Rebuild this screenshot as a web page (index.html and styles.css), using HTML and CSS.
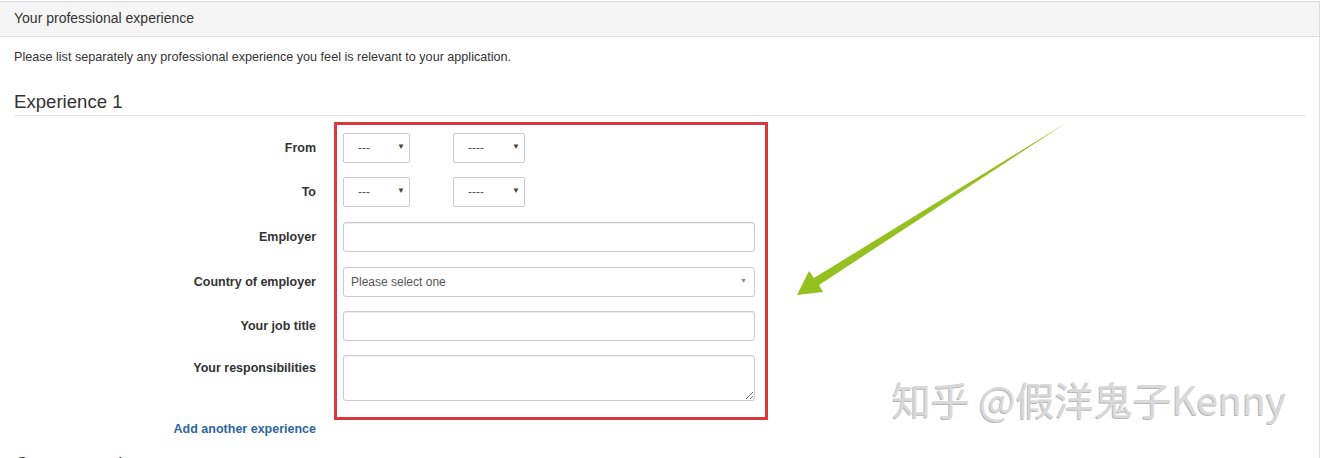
FILE: index.html
```html
<!DOCTYPE html>
<html lang="en">
<head>
  <meta charset="UTF-8">
  <meta name="viewport" content="width=device-width, initial-scale=1.0">
  <title>Your professional experience</title>
  <link rel="stylesheet" href="styles.css">
</head>
<body>
  <div class="panel">
    <div class="panel-heading">Your professional experience</div>
    <div class="panel-body">
      <p class="intro">Please list separately any professional experience you feel is relevant to your application.</p>
      <h3 class="section-title">Experience 1</h3>

      <form class="exp-form">
        <div class="form-row">
          <label>From</label>
          <div class="controls">
            <div class="select-wrap small"><select><option>---</option></select></div>
            <div class="select-wrap year"><select><option>----</option></select></div>
          </div>
        </div>
        <div class="form-row gap">
          <label>To</label>
          <div class="controls">
            <div class="select-wrap small"><select><option>---</option></select></div>
            <div class="select-wrap year"><select><option>----</option></select></div>
          </div>
        </div>
        <div class="form-row gap">
          <label for="employer">Employer</label>
          <div class="controls"><input type="text" id="employer"></div>
        </div>
        <div class="form-row">
          <label for="country">Country of employer</label>
          <div class="controls">
            <div class="select-wrap wide"><select id="country"><option>Please select one</option></select></div>
          </div>
        </div>
        <div class="form-row">
          <label for="job-title">Your job title</label>
          <div class="controls"><input type="text" id="job-title"></div>
        </div>
        <div class="form-row tall">
          <label for="resp">Your responsibilities</label>
          <div class="controls"><textarea id="resp"></textarea></div>
        </div>
        <div class="form-row link-row">
          <label><a href="#" class="add-link">Add another experience</a></label>
        </div>
        <!-- red annotation round the inputs -->
        <div class="highlight"></div>
      </form>

      <h3 class="section-title next">Current employment</h3>
    </div>
  </div>

  <svg class="arrow" width="1321" height="458" viewBox="0 0 1321 458">
    <polygon points="1066,123 819,285 823,292 797,295 809,271 814,278" fill="#94c11f"/>
  </svg>
  <div class="watermark">知乎 @假洋鬼子Kenny</div>
</body>
</html>
```

FILE: styles.css
```css
* {
  margin: 0;
  padding: 0;
  box-sizing: border-box;
}

body {
  font-family: "Liberation Sans", Arial, sans-serif;
  color: #333;
  background-color: #fff;
  width: 1321px;
  height: 458px;
  overflow: hidden;
  position: relative;
}

.panel {
  margin: 1px 1px 0 -1px;
  border: 1px solid #ddd;
  border-bottom: none;
  height: 500px;
}

.panel-heading {
  height: 35px;
  line-height: 33px;
  padding: 0 14px;
  font-size: 14px;
  background-color: #f5f5f5;
  border-bottom: 1px solid #ddd;
}

.panel-body {
  padding: 12px 13px 0 14px;
}

.intro {
  font-size: 12.6px;
  line-height: 17px;
}

.section-title {
  font-size: 18.6px;
  font-weight: normal;
  line-height: 20px;
  margin-top: 26px;
  padding-bottom: 3px;
  border-bottom: 1px solid #e5e5e5;
}

.section-title.next {
  border-bottom: none;
  margin-top: 17px;
  margin-left: 1px;
}

.exp-form {
  position: relative;
  margin-top: 17px;
}

.form-row {
  display: flex;
  align-items: center;
  height: 30px;
  margin-bottom: 14px;
}

.form-row.gap {
  margin-bottom: 15px;
}

.form-row label {
  width: 302px;
  flex-shrink: 0;
  text-align: right;
  font-size: 12.5px;
  font-weight: bold;
}

.form-row .controls {
  margin-left: 27px;
  display: flex;
  gap: 43px;
}

.form-row.tall {
  height: 46px;
  align-items: flex-start;
  margin-bottom: 19px;
}

.form-row.tall label {
  padding-top: 6px;
}

.form-row.link-row {
  height: 17px;
}

.add-link {
  color: #2d669d;
  text-decoration: none;
}

input[type="text"],
textarea,
select {
  font-family: "Liberation Sans", Arial, sans-serif;
  font-size: 12px;
  color: #555;
  background-color: #fff;
  border: 1px solid #ccc;
  border-radius: 3px;
  box-shadow: inset 0 1px 1px rgba(0, 0, 0, 0.07);
}

input[type="text"] {
  width: 412px;
  height: 30px;
}

textarea {
  width: 412px;
  height: 46px;
}

.select-wrap {
  position: relative;
}

.select-wrap select {
  appearance: none;
  -webkit-appearance: none;
  height: 30px;
  border-radius: 2px;
  box-shadow: none;
  padding-left: 14px;
  outline: none;
}

.select-wrap.small select {
  width: 67px;
}

.select-wrap.year select {
  width: 72px;
}

.select-wrap.wide select {
  width: 412px;
  padding-left: 7px;
  border-radius: 3px;
}

.select-wrap::after {
  content: "\25BC";
  position: absolute;
  right: 5px;
  top: 9px;
  font-size: 8px;
  color: #444;
  pointer-events: none;
}

.select-wrap.wide::after {
  right: 8px;
  top: 10px;
  font-size: 7px;
  color: #888;
}

.highlight {
  position: absolute;
  left: 320px;
  top: -11px;
  width: 434px;
  height: 298px;
  border: 3px solid #d8393f;
  pointer-events: none;
}

.arrow {
  position: absolute;
  left: 0;
  top: 0;
  pointer-events: none;
}

.watermark {
  position: absolute;
  left: 892px;
  top: 375px;
  font-family: "Noto Sans CJK SC", sans-serif;
  font-size: 39px;
  line-height: 46px;
  color: #d9d9d9;
  text-shadow: -1px 1px 0 #b8b8b8;
  white-space: nowrap;
  pointer-events: none;
}
```
